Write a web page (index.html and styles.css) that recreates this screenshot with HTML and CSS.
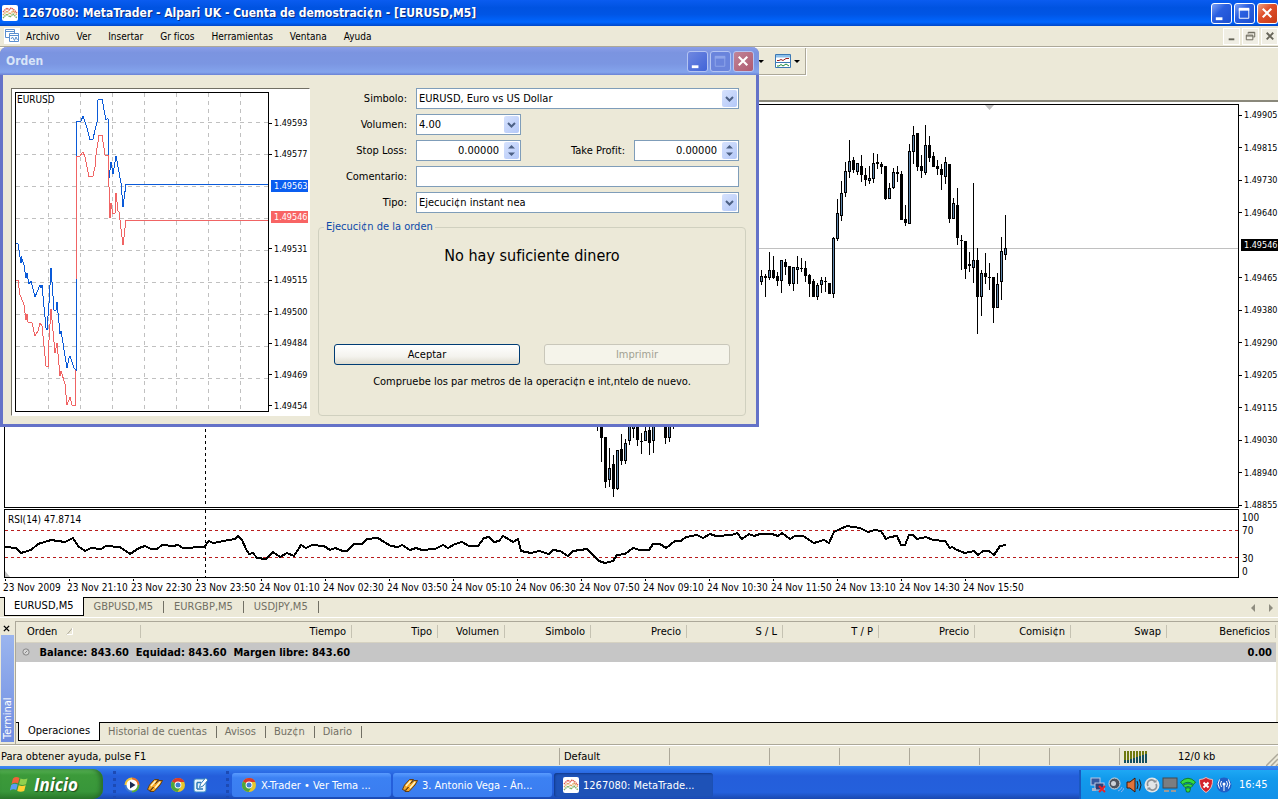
FILE: index.html
```html
<!DOCTYPE html>
<html lang="es">
<head>
    <meta charset="UTF-8">
    <meta name="viewport" content="width=device-width, initial-scale=1.0">
    <title>1267080: MetaTrader - Alpari UK</title>
    <link rel="stylesheet" href="styles.css">
</head>
<body>

    <svg class="sprite" aria-hidden="true">
        <symbol id="mt" viewBox="0 0 16 16">
            <rect width="16" height="16" rx="2" fill="#fff"/>
            <path d="M1 7l4-4 2 2 2-2 2 1 4 4" fill="none" stroke="#dc5a50" stroke-width="1.4" stroke-dasharray="1.4 .6"/>
            <path d="M1 10l4-4 3 3 3-3 4 4" fill="none" stroke="#e0a05a" stroke-width="1.4" stroke-dasharray="1.4 .6"/>
            <path d="M1 13l4-4 3 3 3-3 4 4" fill="none" stroke="#7ab062" stroke-width="1.4" stroke-dasharray="1.4 .6"/>
        </symbol>
        <symbol id="chrome" viewBox="0 0 16 16">
            <circle cx="8" cy="8" r="7" fill="#e8c62c"/>
            <path d="M8 8L2 4.4A7 7 0 0 1 14.4 5H8z" fill="#d8392c"/>
            <path d="M8 8L2 4.4A7 7 0 0 0 7.5 15L11 9.5z" fill="#4ca63c"/>
            <circle cx="8" cy="8" r="3.4" fill="#fff"/>
            <circle cx="8" cy="8" r="2.5" fill="#3f7fd0"/>
        </symbol>
        <symbol id="winamp" viewBox="0 0 16 16">
            <path d="M7.500 2.500h4L8.500 6.500 12 3.500h3.500L13 8l-6 6.500H3L6.500 10 3 13.500.5 12.500 2.500 8z" fill="#f7a928" stroke="#5c3608" stroke-width=".9"/>
            <path d="M8.500 4L4 9M13 5L8 11" stroke="#fff6c8" stroke-width="1.500"/>
        </symbol>
        <symbol id="chevron" viewBox="0 0 9 6">
            <path d="M1 1l3.500 3.500L8 1" fill="none" stroke="#4d6185" stroke-width="2"/>
        </symbol>
    </svg>

    <header class="titlebar">
        <svg class="icon"><use href="#mt"/></svg>
        <h1>1267080: MetaTrader - Alpari UK - Cuenta de demostraci¢n - [EURUSD,M5]</h1>
        <div class="window-buttons">
            <button type="button" aria-label="Minimizar"><svg viewBox="0 0 20 20"><path d="M4 14h7v3H4z" fill="#fff"/></svg></button>
            <button type="button" aria-label="Maximizar"><svg viewBox="0 0 20 20"><path d="M4.500 5v10h10V5z" fill="none" stroke="#fff"/><path d="M4 4h11v3H4z" fill="#fff"/></svg></button>
            <button type="button" class="close" aria-label="Cerrar"><svg viewBox="0 0 20 20"><path d="M5 5l9 9M14 5l-9 9" stroke="#fff" stroke-width="2.200"/></svg></button>
        </div>
    </header>

    <nav class="menubar">
        <svg class="icon" viewBox="0 0 16 16">
            <rect width="16" height="16" fill="#fff"/>
            <path d="M1.500 1.500h9v8h-9zM1.500 3.500h9" fill="#fff" stroke="#5b8fd0"/>
            <path d="M5.500 5.500h9v8h-9zM5.500 7.500h9" fill="#fff" stroke="#5b8fd0"/>
            <path d="M7 11l1.500-2 2 3.500L12 9l1.500 3" fill="none" stroke="#5b8fd0"/>
        </svg>
        <a href="#">Archivo</a>
        <a href="#">Ver</a>
        <a href="#">Insertar</a>
        <a href="#">Gr&nbsp;ficos</a>
        <a href="#">Herramientas</a>
        <a href="#">Ventana</a>
        <a href="#">Ayuda</a>
        <div class="mdi-buttons">
            <button type="button" aria-label="Minimizar gráfico"><svg viewBox="0 0 16 16"><path d="M5 10h6v2H5z" fill="#666459"/></svg></button>
            <button type="button" aria-label="Restaurar gráfico"><svg viewBox="0 0 16 16"><path d="M5.500 5V3.500h7v5H11M3.500 6.500h7v5h-7zM3.500 7.500h7M6 4h6" fill="none" stroke="#666459"/></svg></button>
            <button type="button" aria-label="Cerrar gráfico"><svg viewBox="0 0 16 16"><path d="M5 4l7 7M12 4l-7 7" stroke="#666459" stroke-width="2"/></svg></button>
        </div>
    </nav>

    <div class="toolbar">
        <div class="toolbar-group">
            <button type="button" aria-label="Períodos"><span class="caret"></span></button>
            <button type="button" aria-label="Plantillas">
                <svg class="icon" viewBox="0 0 16 16">
                    <path d="M.5 1.500h15v13H.5z" fill="#fff" stroke="#3b78b4"/>
                    <path d="M1 2h14v2.500H1z" fill="#8cc0ea"/>
                    <path d="M1 9.500h14" stroke="#3b78b4"/>
                    <path d="M2 7.500h2l2-1 2 1 3-2h3" fill="none" stroke="#9c2020"/>
                    <path d="M2 13h2l2-1.500 2 1.500 3-2 3 2" fill="none" stroke="#1d8a3c"/>
                </svg>
                <span class="caret"></span>
            </button>
        </div>
    </div>

    <main class="chart">
        <div class="plots">
            <svg class="plot price-plot" role="img" aria-label="EURUSD M5">
                <path d="M980 0h9l-4.500 5z" fill="#c0c0c0"/>
                <line x1="0" x2="100%" y1="143.500" y2="143.500" stroke="#c0c0c0"/>
                <line class="day-line" x1="200.500" x2="200.500" y1="0" y2="100%"/>
                <g id="candles"></g>
            </svg>
            <svg class="plot rsi-plot" role="img" aria-label="RSI">
                <line class="level" x1="0" x2="100%" y1="20.500" y2="20.500"/>
                <line class="level" x1="0" x2="100%" y1="47.500" y2="47.500"/>
                <line class="day-line" x1="200.500" x2="200.500" y1="0" y2="100%"/>
                <path d="M0 61l5 6H0z" fill="#c0c0c0"/>
                <polyline class="rsi-line" points="0,37 11,38 16,43 26,40 33,34 46,30 60,32 68,28 73,36 80,41 86,38 96,39 101,36 115,37 125,44 134,38 140,36 146,39 152,39 157,35 168,36 173,35 178,38 199,37 204,31 208,33 224,30 230,29 233,26 237,30 241,39 244,44 248,43 252,48 261,49 268,42 275,47 282,43 289,46 296,35 301,38 307,35 319,36 325,40 330,38 338,41 342,41 349,34 357,34 362,29 373,28 379,32 386,36 393,37 397,35 405,40 411,38 417,40 430,39 438,35 443,38 450,34 457,32 464,36 473,36 479,28 484,27 489,32 494,31 498,26 505,30 508,32 513,29 516,41 526,43 534,41 544,44 548,40 555,41 563,46 568,41 582,39 587,44 594,51 600,53 608,51 612,45 620,44 628,38 635,40 644,40 648,34 655,34 661,38 670,31 676,31 681,27 692,25 698,28 705,24 711,26 727,25 732,23 737,29 744,24 749,26 755,24 767,24 773,26 777,23 785,29 790,26 798,26 809,33 819,30 824,33 829,22 835,19 842,16 855,18 863,22 870,20 876,21 881,29 885,27 892,26 896,35 900,35 904,25 908,25 912,29 921,27 928,30 940,31 945,38 947,37 952,40 960,43 969,41 973,45 978,41 984,41 989,45 995,36 1001,35"/>
                <text x="3" y="13">RSI(14) 47.8714</text>
            </svg>
            <ol class="times">
                <li>23 Nov 2009</li>
                <li>23 Nov 21:10</li>
                <li>23 Nov 22:30</li>
                <li>23 Nov 23:50</li>
                <li>24 Nov 01:10</li>
                <li>24 Nov 02:30</li>
                <li>24 Nov 03:50</li>
                <li>24 Nov 05:10</li>
                <li>24 Nov 06:30</li>
                <li>24 Nov 07:50</li>
                <li>24 Nov 09:10</li>
                <li>24 Nov 10:30</li>
                <li>24 Nov 11:50</li>
                <li>24 Nov 13:10</li>
                <li>24 Nov 14:30</li>
                <li>24 Nov 15:50</li>
            </ol>
        </div>
        <div class="scales">
            <ul class="prices">
                <li>1.49905</li>
                <li>1.49815</li>
                <li>1.49730</li>
                <li>1.49640</li>
                <li class="last-price">1.49546</li>
                <li>1.49465</li>
                <li>1.49380</li>
                <li>1.49290</li>
                <li>1.49205</li>
                <li>1.49115</li>
                <li>1.49030</li>
                <li>1.48940</li>
                <li>1.48855</li>
            </ul>
            <div class="rsi-scale">
                <div>100<br>70</div>
                <div>30<br>0</div>
            </div>
        </div>
    </main>

    <nav class="tabs chart-tabs">
        <a href="#" class="active">EURUSD,M5</a>
        <a href="#">GBPUSD,M5</a>
        <a href="#">EURGBP,M5</a>
        <a href="#">USDJPY,M5</a>
        <div class="tab-scroll">
            <button type="button" aria-label="Anterior"><svg viewBox="0 0 5 8"><path d="M4 0v8L0 4z" fill="#8f8d80"/></svg></button>
            <button type="button" aria-label="Siguiente"><svg viewBox="0 0 5 8"><path d="M1 0v8l4-4z" fill="#8f8d80"/></svg></button>
        </div>
    </nav>

    <section class="terminal">
        <div class="terminal-side">
            <button type="button" aria-label="Cerrar terminal"><svg viewBox="0 0 8 8"><path d="M1 1l6 6M7 1L1 7" stroke="#000" stroke-width="1.600"/></svg></button>
            <span>Terminal</span>
        </div>
        <div class="terminal-body">
            <div class="orders">
                <table>
                    <colgroup>
                        <col class="c-order"><col class="c-time"><col class="c-mid"><col class="c-volume"><col class="c-mid">
                        <col class="c-wide"><col class="c-wide"><col class="c-wide"><col class="c-wide"><col class="c-wide"><col class="c-wide"><col>
                    </colgroup>
                    <thead>
                        <tr>
                            <th class="left">Orden
                                <svg viewBox="0 0 8 8"><path d="M1 7.500L6.500 1" stroke="#aca899" fill="none"/><path d="M6.500 1v6.500H1" stroke="#fff" fill="none"/></svg>
                            </th>
                            <th>Tiempo</th>
                            <th>Tipo</th>
                            <th>Volumen</th>
                            <th>Simbolo</th>
                            <th>Precio</th>
                            <th>S / L</th>
                            <th>T / P</th>
                            <th>Precio</th>
                            <th>Comisi¢n</th>
                            <th>Swap</th>
                            <th>Beneficios</th>
                        </tr>
                    </thead>
                    <tbody>
                        <tr>
                            <td colspan="11">
                                <svg viewBox="0 0 9 9"><circle cx="4.500" cy="4.500" r="3.500" fill="#d8d8d8" stroke="#7d7d7d"/><path d="M3 6l3-3" stroke="#7d7d7d"/></svg>
                                Balance: 843.60&nbsp; Equidad: 843.60&nbsp; Margen libre: 843.60
                            </td>
                            <td class="profit">0.00</td>
                        </tr>
                    </tbody>
                </table>
            </div>
            <nav class="tabs terminal-tabs">
                <a href="#" class="active">Operaciones</a>
                <a href="#">Historial de cuentas</a>
                <a href="#">Avisos</a>
                <a href="#">Buz¢n</a>
                <a href="#">Diario</a>
            </nav>
        </div>
    </section>

    <div class="statusbar">
        <span class="help">Para obtener ayuda, pulse F1</span>
        <span class="profile">Default</span>
        <span class="date"></span>
        <span class="cell"></span>
        <span class="cell"></span>
        <span class="cell"></span>
        <span class="cell"></span>
        <span class="cell"></span>
        <span class="traffic">
            <svg viewBox="0 0 24 12">
                <path d="M1 0v12M4 0v12M7 0v12M10 0v12M13 0v12M16 0v12M19 0v12M22 0v12" stroke="#6f7a10" stroke-width="2"/>
                <path d="M1 9v3M4 9v3M7 8v4M10 7v5M13 6v6M16 5v7M19 4v8M22 3v9" stroke="#14505e" stroke-width="2"/>
            </svg>
            12/0 kb
        </span>
        <svg class="grip" viewBox="0 0 12 14"><path d="M0 14L12 2M5 14l7-7M10 14l2-2" stroke="#aca899" stroke-width="1.500"/></svg>
    </div>

    <footer class="taskbar">
        <button type="button" class="start">
            <svg viewBox="0 0 18 18">
                <path d="M3 3.500q3-2.500 6.500-.5L8 8.500q-3-1.500-6.500.5z" fill="#f0623a"/>
                <path d="M10.500 3.500q3 1.500 7 0L16 9.200q-3.500 1.500-7 0z" fill="#8fd04e"/>
                <path d="M1.200 10q3-2 6.500-.5L6.200 15Q3 13.500-.2 15.500z" fill="#5a9cf4"/>
                <path d="M8.700 10.200q3 1.500 7 0L14.200 16q-3.500 1.500-7 0z" fill="#ffd032"/>
            </svg>
            Inicio
        </button>
        <div class="quick">
            <a href="#" aria-label="Reproductor"><svg class="icon" viewBox="0 0 16 16">
                <circle cx="8" cy="8" r="7.500" fill="#3c78d0"/>
                <path d="M8 .5A7.500 7.500 0 0 1 15.500 8H8z" fill="#e8702a"/><path d="M8 15.500A7.500 7.500 0 0 0 15.500 8H8z" fill="#58ac38"/><path d="M8 .5A7.500 7.500 0 0 0 .5 8H8z" fill="#f0c438"/>
                <circle cx="8" cy="8" r="5.500" fill="#fff"/><path d="M6 4.500L11.500 8 6 11.500z" fill="#1b2a52"/>
            </svg></a>
            <a href="#" aria-label="Winamp"><svg class="icon"><use href="#winamp"/></svg></a>
            <a href="#" aria-label="Chrome"><svg class="icon"><use href="#chrome"/></svg></a>
            <a href="#" aria-label="Escritorio"><svg class="icon" viewBox="0 0 16 16">
                <rect x="1" y="2" width="12" height="13" rx="2" fill="#e8f5fd" stroke="#3a8ac4"/>
                <path d="M4 5.500h4M4 12h6M4 5.500V12" stroke="#2d7ab8" stroke-width="1.500" fill="none"/>
                <path d="M6.500 10.500l1-3.500 5-6 2.500 2-5 6z" fill="#fff" stroke="#2d7ab8"/>
            </svg></a>
        </div>
        <div class="tasks">
            <button type="button"><svg class="icon"><use href="#chrome"/></svg>X-Trader • Ver Tema ...</button>
            <button type="button"><svg class="icon"><use href="#winamp"/></svg>3. Antonio Vega - Án...</button>
            <button type="button" class="active"><svg class="icon"><use href="#mt"/></svg>1267080: MetaTrade...</button>
        </div>
        <div class="tray">
            <svg viewBox="0 0 16 16"><rect x="1" y="1" width="9" height="7" fill="#3559a0" stroke="#b8c8e4"/><rect x="5" y="6" width="9" height="7" fill="#2c3f78" stroke="#b8c8e4"/><path d="M2 11h4v3H2z" fill="#a7b4cc"/><path d="M9 9l6 6M15 9l-6 6" stroke="#e2242a" stroke-width="2"/></svg>
            <svg viewBox="0 0 16 16"><circle cx="6.500" cy="6.500" r="5.500" fill="#4d545e" stroke="#d8dce0"/><circle cx="5.500" cy="6.500" r="2.500" fill="#cdd2d8"/><path d="M10 14q3-1 4-4M13 15q2-1 3-4" stroke="#8cb0ec" fill="none"/></svg>
            <svg viewBox="0 0 16 16"><path d="M1 5h3l5-4v14l-5-4H1z" fill="#e0733a" stroke="#3d1a0c"/><path d="M11 4q2 4 0 8M13.500 2.500q3 5.500 0 11" stroke="#2b1a14" fill="none"/></svg>
            <svg viewBox="0 0 16 16"><circle cx="8" cy="8" r="7.500" fill="#e2e5e7"/><path d="M4 9a4 4 0 0 1 7-4M12 7a4 4 0 0 1-7 4" fill="none" stroke="#8c9196" stroke-width="1.800"/><path d="M9.500 5.500h3v-3zM6.500 10.500h-3v3z" fill="#8c9196"/></svg>
            <svg viewBox="0 0 16 16"><rect x="1" y="1" width="14" height="10" fill="#7b7d80" stroke="#45484c"/><path d="M2 13h5v2H2zM9 13h5v2H9z" fill="#9a9a98"/></svg>
            <svg viewBox="0 0 16 16"><path d="M.5 5q7.500-7.500 15 0l-2 2.500q-5.500-4.500-11 0z" fill="#35dc40" stroke="#0f6a18" stroke-width=".8"/><path d="M3 8.500q5-3.500 10 0l-2 2q-3-2-6 0z" fill="#35dc40" stroke="#0f6a18" stroke-width=".8"/><path d="M5.500 11.500q2.500-1.500 5 0L9.500 15h-3z" fill="#35dc40" stroke="#0f6a18" stroke-width=".8"/></svg>
            <svg viewBox="0 0 16 16"><path d="M8 .5q3 2 6.500 2 .5 9-6.500 13Q1 11.500 1.500 2.500 5 2.500 8 .5z" fill="#d4222c" stroke="#e9bcbc"/><path d="M5.500 5.500l5 5M10.500 5.500l-5 5" stroke="#fff" stroke-width="2"/></svg>
            <svg viewBox="0 0 16 16"><circle cx="8" cy="8" r="7.500" fill="#1f5fc8"/><circle cx="8" cy="7" r="1.500" fill="#fff"/><path d="M8 8v6M5.500 10q-2-3 0-6M10.500 10q2-3 0-6M3.500 11.500q-3-4.500 0-9M12.500 11.500q3-4.500 0-9" stroke="#fff" fill="none"/></svg>
            <span>16:45</span>
        </div>
    </footer>

    <div class="dialog" role="dialog" aria-labelledby="dialog-title">
        <div class="dialog-title">
            <h2 id="dialog-title">Orden</h2>
            <div class="window-buttons">
                <button type="button" aria-label="Minimizar orden"><svg viewBox="0 0 20 20"><path d="M4 14h7v3H4z" fill="#fff"/></svg></button>
                <button type="button" aria-label="Maximizar orden" disabled><svg viewBox="0 0 20 20"><path d="M4.500 5v10h10V5z" fill="none" stroke="#8fa5ea"/><path d="M4 4h11v3H4z" fill="#8fa5ea"/></svg></button>
                <button type="button" class="close" aria-label="Cerrar orden"><svg viewBox="0 0 20 20"><path d="M5 5l9 9M14 5l-9 9" stroke="#fff" stroke-width="2.200"/></svg></button>
            </div>
        </div>
        <form class="dialog-body">
            <div class="tick-chart">
                <svg class="plot" role="img" aria-label="EURUSD ticks">
                    <g id="grid"></g>
                    <polyline class="ask" points="0,150 2,151 5,170 5,163 8,172 10,185 11,180 13,191 15,188 19,204 24,192 25,195 26,192 30,235 31,237 33,210 35,175 38,217 40,217 41,209 44,241 45,238 51,275 53,265 54,263 58,275 60,277 60,28 65,28 67,23 71,35 74,47 77,46 79,37 81,29 82,7 86,6 90,27 92,25 93,85 95,69 97,81 100,63 103,79 105,90 107,114 110,91 400,91"/>
                    <polyline class="bid" points="0,187 2,187 4,202 5,204 8,212 10,227 11,221 12,229 16,230 19,243 22,238 24,230 26,233 30,273 32,274 33,247 35,216 39,260 41,250 44,283 45,278 49,291 51,312 54,304 56,312 59,312 59,277"/>
                    <polyline class="bid" points="60,186 60,63 63,64 67,59 69,64 71,74 73,84 77,83 79,74 80,62 83,42 86,42 89,62 92,62 94,125 95,110 97,121 99,120 100,100 102,118 103,119 107,152 110,127 400,127"/>
                    <text x="1" y="10">EURUSD</text>
                </svg>
                <ul class="tick-scale">
                    <li>1.49593</li>
                    <li>1.49577</li>
                    <li class="ask-price">1.49563</li>
                    <li class="bid-price">1.49546</li>
                    <li>1.49531</li>
                    <li>1.49515</li>
                    <li>1.49500</li>
                    <li>1.49484</li>
                    <li>1.49469</li>
                    <li>1.49454</li>
                </ul>
            </div>
            <div class="order">
                <div class="fields">
                    <label for="simbolo">Simbolo:</label>
                    <div class="control wide">
                        <select id="simbolo"><option>EURUSD, Euro vs US Dollar</option></select>
                        <span class="drop"><svg><use href="#chevron"/></svg></span>
                    </div>
                    <label for="volumen">Volumen:</label>
                    <div class="control">
                        <select id="volumen"><option>4.00</option></select>
                        <span class="drop"><svg><use href="#chevron"/></svg></span>
                    </div>
                    <label class="new-row" for="stop">Stop Loss:</label>
                    <div class="control spin">
                        <input type="text" id="stop" value="0.00000">
                        <span class="drop"><svg viewBox="0 0 9 13"><path d="M1 4.500h7L4.500 1zM1 8.500h7L4.500 12z" fill="#4d6185"/></svg></span>
                    </div>
                    <label for="take">Take Profit:</label>
                    <div class="control spin">
                        <input type="text" id="take" value="0.00000">
                        <span class="drop"><svg viewBox="0 0 9 13"><path d="M1 4.500h7L4.500 1zM1 8.500h7L4.500 12z" fill="#4d6185"/></svg></span>
                    </div>
                    <label for="comentario">Comentario:</label>
                    <div class="control wide"><input type="text" id="comentario"></div>
                    <label for="tipo">Tipo:</label>
                    <div class="control wide">
                        <select id="tipo"><option>Ejecuci¢n instant&nbsp;nea</option></select>
                        <span class="drop"><svg><use href="#chevron"/></svg></span>
                    </div>
                </div>
                <fieldset>
                    <legend>Ejecuci¢n de la orden</legend>
                    <p class="result">No hay suficiente dinero</p>
                    <div class="actions">
                        <button type="button" class="default">Aceptar</button>
                        <button type="button" disabled>Imprimir</button>
                    </div>
                    <p class="hint">Compruebe los par&nbsp;metros de la operaci¢n e int‚ntelo de nuevo.</p>
                </fieldset>
            </div>
        </form>
    </div>

    <script src="script.js"></script>
</body>
</html>
```
FILE: styles.css
```css
* {
    margin: 0;
    padding: 0;
    box-sizing: border-box;
}

body {
    font-family: Tahoma, "DejaVu Sans Condensed", "DejaVu Sans", sans-serif;
    font-size: 11px;
    color: #000;
    background: #ece9d8;
    height: 100vh;
    display: flex;
    flex-direction: column;
    overflow: hidden;
}

ul, ol {
    list-style: none;
}

a {
    color: inherit;
    text-decoration: none;
}

button, input, select {
    font: inherit;
    color: inherit;
}

svg {
    display: block;
}

.sprite {
    display: none;
}

.icon {
    width: 16px;
    height: 16px;
    flex: none;
}

/* Title bar */
.titlebar {
    height: 26px;
    flex: none;
    display: flex;
    align-items: center;
    gap: 4px;
    padding: 0 0 0 2px;
    background: linear-gradient(#0a5cf0, #0053e1 30%, #0055e5 55%, #0066ff 85%, #0047c8);
}

.titlebar h1, .dialog-title h2 {
    flex: 1;
    font-size: 12px;
    color: #fff;
    text-shadow: 1px 1px #0a2a80;
    white-space: nowrap;
}

.window-buttons {
    display: flex;
    gap: 2px;
}

.window-buttons button {
    width: 21px;
    height: 21px;
    border: 1px solid #fff;
    border-radius: 3px;
    background: linear-gradient(135deg, #7fa3f5, #2a5fe0 40%, #1c4fd0);
}

.window-buttons .close {
    background: linear-gradient(135deg, #f0a080, #e0502c 40%, #c83a14);
}

.window-buttons svg {
    width: 19px;
    height: 19px;
}

/* Menu */
.menubar {
    height: 21px;
    flex: none;
    display: flex;
    align-items: center;
    gap: 17px;
    padding-left: 4px;
    font-size: 10px;
    border-bottom: 1px solid #aca899;
}

.menubar > .icon {
    margin-right: -11px;
}

.mdi-buttons {
    margin-left: auto;
    display: flex;
    gap: 2px;
}

.mdi-buttons button {
    width: 17px;
    height: 17px;
    border: 1px solid #fff;
    background: #f0eee4;
}

/* Toolbar */
.toolbar {
    height: 53px;
    flex: none;
    border-top: 1px solid #fff;
}

.toolbar-group {
    width: 806px;
    height: 27px;
    display: flex;
    justify-content: flex-end;
    align-items: center;
    gap: 11px;
    padding-right: 5px;
    border: solid #aca899;
    border-width: 0 1px 1px 0;
    box-shadow: 1px 1px #fff;
}

.toolbar button {
    display: flex;
    align-items: center;
    gap: 3px;
    border: 0;
    background: none;
}

.caret {
    border: 3px solid transparent;
    border-top-color: #000;
    border-bottom: 0;
}

/* Chart */
.chart {
    flex: 1;
    min-height: 0;
    display: flex;
    padding: 2px 0 0 4px;
    border-top: 2px solid #8a887b;
    font-size: 10px;
    background: #fff;
}

.plots {
    flex: 1;
    min-width: 0;
    display: flex;
    flex-direction: column;
    gap: 1px;
}

.plot {
    width: 100%;
    border: 1px solid #000;
    overflow: hidden;
}

.price-plot {
    flex: 1;
    min-height: 0;
}

.rsi-plot {
    height: 69px;
}

.level {
    stroke: #b81c1c;
    stroke-dasharray: 3 3;
    shape-rendering: crispEdges;
}

.day-line {
    stroke: #000;
    stroke-dasharray: 3 3;
}

.rsi-line {
    fill: none;
    stroke: #000;
    stroke-width: 2;
    shape-rendering: crispEdges;
}

#candles {
    shape-rendering: crispEdges;
}

.body {
    fill: #000;
}

.rise {
    fill: #5f87ad;
}

.times {
    height: 18px;
    display: flex;
    margin-left: -1px;
}

.times li {
    flex: 0 0 64px;
    line-height: 14px;
    white-space: nowrap;
}

.times li::before {
    content: "";
    display: block;
    width: 1px;
    height: 2px;
    margin-left: 2px;
    background: #000;
}

.scales {
    width: 39px;
    flex: none;
    display: flex;
    flex-direction: column;
}

.prices, .tick-scale {
    font-size: 9px;
}

.prices {
    flex: 1;
    display: flex;
    flex-direction: column;
    justify-content: space-between;
    padding-top: 5px;
}

.prices li, .tick-scale li {
    display: flex;
    align-items: center;
    gap: 2px;
    line-height: 12px;
}

.prices li::before, .tick-scale li::before {
    content: "";
    width: 3px;
    height: 1px;
    background: #000;
}

.prices .last-price {
    margin-left: 2px;
    gap: 0;
    color: #fff;
    background: #000;
}

.rsi-scale {
    height: 67px;
    display: flex;
    flex-direction: column;
    justify-content: space-between;
    margin-bottom: 19px;
    padding-left: 3px;
    line-height: 13px;
}

/* Tabs under the chart and inside the terminal */
.tabs {
    flex: none;
    display: flex;
    align-items: flex-start;
    border-top: 1px solid #000;
    color: #716f64;
}

.tabs a {
    padding: 0 10px 0 8px;
    line-height: 18px;
    position: relative;
}

.tabs a:not(.active)::after {
    content: "";
    position: absolute;
    right: 0;
    top: 3px;
    height: 12px;
    border-right: 1px solid #716f64;
}

.tabs .active {
    color: #000;
    background: #fff;
    border: 1px solid #000;
    border-width: 0 1px 1px;
    padding: 0 9px;
    margin-top: -1px;
}

.chart-tabs {
    height: 20px;
    padding-left: 4px;
}

.chart-tabs a {
    padding: 0 11px 0 10px;
}

.tab-scroll {
    margin-left: auto;
    display: flex;
    gap: 12px;
    padding: 6px 5px 0 0;
}

.tab-scroll button, .terminal-side button {
    border: 0;
    background: none;
}

.tab-scroll svg {
    width: 5px;
    height: 8px;
}

/* Terminal */
.terminal {
    height: 127px;
    flex: none;
    display: flex;
    gap: 1px;
    padding-top: 3px;
    border-top: 1px solid #fff;
}

.terminal-side {
    width: 14px;
    display: flex;
    flex-direction: column;
    padding-left: 1px;
}

.terminal-side button {
    height: 14px;
    padding-left: 2px;
}

.terminal-side svg {
    width: 7px;
    height: 7px;
}

.terminal-side span {
    height: 107px;
    writing-mode: vertical-rl;
    transform: rotate(180deg);
    line-height: 13px;
    padding-top: 3px;
    color: #fff;
    background: linear-gradient(#6f8de2, #9bb5ee);
}

.terminal-body {
    flex: 1;
    display: flex;
    flex-direction: column;
    border-top: 1px solid #aca899;
    border-left: 1px solid #aca899;
}

.orders {
    flex: 1;
    margin-right: 2px;
    background: #fff;
}

.orders table {
    width: 100%;
    table-layout: fixed;
    border-collapse: collapse;
}

.c-order { width: 125px; }
.c-time { width: 211px; }
.c-mid { width: 86px; }
.c-volume { width: 67px; }
.c-wide { width: 96px; }

.orders th {
    height: 20px;
    padding-right: 6px;
    text-align: right;
    font-weight: normal;
    background: #ece9d8;
    border-bottom: 1px solid #d6d2c2;
    background-image: linear-gradient(#c5c2b2, #c5c2b2);
    background-size: 1px 13px;
    background-position: right 3px;
    background-repeat: no-repeat;
}

.orders th.left {
    text-align: left;
    padding-left: 11px;
}

.orders th svg, .orders td svg {
    display: inline-block;
    width: 8px;
    height: 8px;
}

.orders th svg {
    margin-left: 6px;
}

.orders td {
    height: 20px;
    padding-left: 6px;
    font-weight: bold;
    background: #c6c6c6;
}

.orders td svg {
    margin-right: 6px;
}

.orders .profit {
    text-align: right;
    padding-right: 4px;
}

.terminal-tabs {
    height: 22px;
    padding-left: 2px;
}

/* Status bar */
.statusbar {
    height: 22px;
    flex: none;
    display: flex;
    align-items: center;
    padding-top: 2px;
    border-top: 1px solid #aca899;
    box-shadow: inset 0 1px #fff;
    line-height: 17px;
}

.statusbar span {
    height: 17px;
    padding-left: 4px;
    border-left: 1px solid #aca899;
    white-space: nowrap;
}

.statusbar .help {
    flex: 1;
    padding-left: 1px;
    border: 0;
}

.profile { width: 110px; }
.date { width: 100px; }
.cell { width: 70px; }

.statusbar .traffic {
    width: 147px;
    display: flex;
    align-items: center;
    gap: 30px;
}

.traffic svg {
    width: 24px;
    height: 12px;
    shape-rendering: crispEdges;
}

.grip {
    width: 12px;
    height: 14px;
    align-self: flex-end;
}

/* Taskbar */
.taskbar {
    height: 33px;
    flex: none;
    display: flex;
    align-items: stretch;
    color: #fff;
    background: linear-gradient(#3f8cf0, #2f74ea 12%, #245edb 30%, #2460dc 80%, #1a48b0);
}

.start {
    width: 103px;
    margin-top: 3px;
    padding-left: 10px;
    display: flex;
    align-items: center;
    gap: 6px;
    border: 0;
    border-radius: 0 10px 10px 0;
    font: italic bold 17px "Open Sans", sans-serif;
    color: #fff;
    text-shadow: 1px 1px 1px #1c4a1a;
    background: linear-gradient(#5cb85a, #3c9a3a 20%, #38963a 75%, #2a7a2a);
    box-shadow: inset -3px 0 4px #2a6f2c;
}

.start svg {
    width: 18px;
    height: 18px;
}

.quick {
    width: 116px;
    display: flex;
    align-items: center;
    gap: 7px;
    margin: 5px 3px 0 10px;
    padding-left: 8px;
    border: dotted #1c4ab4;
    border-width: 0 3px;
}

.tasks {
    flex: 1;
    display: flex;
    gap: 2px;
    padding: 7px 0 2px;
}

.tasks button {
    flex: 0 1 159px;
    display: flex;
    align-items: center;
    gap: 4px;
    padding: 0 9px;
    border: 0;
    border-radius: 3px;
    color: #fff;
    background: linear-gradient(#5a9cff, #3c81f3 20%, #3a7df0);
    white-space: nowrap;
}

.tasks .active {
    background: #1e52b7;
    box-shadow: inset 1px 1px 2px #123a8c;
}

.tray {
    width: 199px;
    display: flex;
    align-items: center;
    gap: 2px;
    margin-top: 4px;
    padding-left: 9px;
    border-left: 2px solid #1a58c0;
    background: linear-gradient(#1ea8f4, #129aec 30%, #1290e8);
}

.tray svg {
    width: 16px;
    height: 16px;
}

.tray span {
    margin-left: 5px;
}

/* Order dialog */
.dialog {
    position: absolute;
    top: 47px;
    left: 0;
    width: 759px;
    border: 3px solid #6472c8;
    border-top: 0;
    border-radius: 7px 7px 0 0;
    background: #ece9d8;
}

.dialog-title {
    height: 28px;
    margin: 0 -3px;
    display: flex;
    align-items: center;
    padding: 0 5px 0 6px;
    border-radius: 7px 7px 0 0;
    background: linear-gradient(#8a9ee8, #7b94e0 20%, #7b96e2 60%, #84a4ec 90%, #6a82d4);
}

.dialog-title h2 {
    color: #d8e4f8;
    text-shadow: none;
}

.dialog .window-buttons button {
    border-color: #b4c4f2;
    background: linear-gradient(135deg, #7088e0, #4064d8);
}

.dialog .window-buttons button:disabled {
    background: #6a84dc;
}

.dialog .window-buttons .close {
    background: linear-gradient(135deg, #c08498, #b05a70);
}

.dialog-body {
    display: flex;
    gap: 8px;
    padding: 13px 10px 8px 8px;
}

.tick-chart {
    width: 299px;
    height: 328px;
    display: flex;
    padding: 3px 1px 3px 3px;
    border: 1px solid #fff;
    border-top-color: #716f64;
    border-left-color: #716f64;
    background: #fff;
}

.tick-chart .plot {
    flex: 1;
    min-width: 0;
    height: 320px;
    font-size: 10px;
    shape-rendering: crispEdges;
}

.grid-line {
    stroke: #c0c0c0;
    stroke-dasharray: 4 4;
}

.ask, .bid {
    fill: none;
    stroke: #0a5ad8;
}

.bid {
    stroke: #f06464;
}

.tick-scale {
    width: 39px;
    flex: none;
    display: flex;
    flex-direction: column;
    justify-content: space-between;
    padding: 25px 0 0;
}

.tick-scale .ask-price, .tick-scale .bid-price {
    margin-left: 2px;
    gap: 0;
    color: #fff;
    background: #0a5ef0;
}

.tick-scale .bid-price {
    background: #f86464;
}

.tick-scale .ask-price::before, .tick-scale .bid-price::before {
    background: none;
}

.order {
    flex: 1;
    display: flex;
    flex-direction: column;
    gap: 7px;
}

.fields {
    display: grid;
    grid-template-columns: 89px 105px 1fr 105px;
    column-gap: 9px;
    row-gap: 5px;
    padding-right: 7px;
}

.fields label {
    text-align: right;
    line-height: 21px;
}

.new-row {
    grid-column: 1;
}

.control {
    position: relative;
    height: 21px;
}

.wide {
    grid-column: span 3;
}

.control input, .control select {
    width: 100%;
    height: 21px;
    padding: 0 2px;
    border: 1px solid #7f9db9;
    border-radius: 0;
    background: #fff;
    appearance: none;
}

.control.spin input {
    padding-right: 21px;
    text-align: right;
}

.drop {
    position: absolute;
    top: 2px;
    right: 2px;
    width: 15px;
    height: 17px;
    display: flex;
    align-items: center;
    justify-content: center;
    border-radius: 2px;
    background: linear-gradient(135deg, #d6e2fd, #b4c8f8);
    pointer-events: none;
}

.drop svg {
    width: 9px;
    height: 6px;
}

.spin .drop svg {
    height: 13px;
}

fieldset {
    flex: 1;
    display: flex;
    flex-direction: column;
    padding: 0 15px;
    border: 1px solid #d0d0bf;
    border-radius: 4px;
}

legend {
    margin-left: -10px;
    padding: 0 2px;
    line-height: 14px;
    color: #0b48a8;
}

.result {
    height: 110px;
    padding-top: 9px;
    font-size: 16px;
    line-height: 26px;
    text-align: center;
}

.actions {
    display: flex;
    gap: 24px;
}

.actions button {
    flex: 1;
    height: 21px;
    border: 1px solid #c9c7ba;
    border-radius: 3px;
    background: #f5f4ea;
}

.actions button:disabled {
    color: #a1a192;
}

.actions .default {
    border-color: #003c74;
    background: linear-gradient(#fff, #f4f3ee 60%, #dfdccf);
}

.hint {
    margin-top: 9px;
    line-height: 16px;
    text-align: center;
}
```
FILE: script.js
```js
const SVG_NS = 'http://www.w3.org/2000/svg';

// [x, high, body top, body bottom, low, closes up]
const candles = [
    [592, 318, 320, 322, 326, 0], [596, 318, 320, 333, 357, 0], [600, 332, 332, 377, 383, 0],
    [604, 343, 363, 375, 382, 1], [608, 350, 359, 384, 392, 0], [612, 345, 345, 384, 385, 1],
    [616, 329, 344, 356, 360, 0], [620, 334, 338, 356, 359, 1], [624, 318, 320, 336, 340, 1],
    [628, 318, 320, 324, 333, 1], [632, 318, 320, 335, 341, 0], [636, 328, 336, 337, 349, 0],
    [640, 318, 326, 336, 336, 1], [644, 322, 325, 338, 350, 0], [648, 318, 320, 336, 348, 1],
    [660, 318, 320, 333, 339, 0], [664, 318, 320, 333, 337, 1], [668, 318, 320, 322, 324, 0],
    [756, 165, 171, 177, 180, 1], [760, 169, 171, 173, 192, 0], [764, 147, 165, 173, 175, 1],
    [768, 151, 165, 173, 174, 0], [772, 167, 171, 176, 181, 0], [776, 155, 155, 176, 188, 1],
    [780, 154, 157, 162, 170, 0], [784, 161, 161, 179, 181, 0], [788, 162, 162, 179, 186, 1],
    [792, 151, 162, 165, 179, 1], [796, 153, 163, 164, 167, 0], [800, 156, 163, 171, 177, 0],
    [804, 169, 170, 179, 192, 0], [808, 174, 176, 192, 192, 0], [812, 178, 180, 192, 195, 1],
    [816, 172, 175, 180, 188, 1], [820, 172, 176, 177, 187, 0], [824, 178, 178, 189, 189, 0],
    [828, 132, 133, 189, 193, 1], [832, 94, 108, 134, 136, 1], [836, 76, 88, 111, 116, 1],
    [840, 57, 66, 88, 92, 1], [844, 35, 56, 67, 73, 1], [848, 52, 55, 65, 68, 0],
    [852, 58, 58, 67, 70, 1], [856, 50, 61, 70, 77, 0], [860, 63, 70, 75, 81, 0],
    [864, 61, 73, 76, 79, 1], [868, 48, 58, 74, 78, 1], [872, 49, 57, 59, 64, 0],
    [876, 57, 59, 62, 69, 0], [880, 61, 61, 94, 95, 0], [884, 78, 83, 94, 94, 1],
    [888, 63, 67, 83, 84, 1], [892, 61, 67, 69, 77, 0], [896, 66, 69, 115, 115, 0],
    [900, 100, 114, 118, 121, 0], [904, 39, 46, 119, 119, 1], [908, 21, 30, 47, 59, 1],
    [912, 28, 28, 62, 66, 0], [916, 50, 61, 66, 73, 0], [920, 20, 40, 68, 70, 1],
    [924, 31, 40, 53, 57, 0], [928, 47, 51, 62, 62, 0], [932, 55, 61, 64, 70, 0],
    [936, 59, 64, 70, 85, 0], [940, 52, 57, 72, 79, 1], [944, 59, 59, 114, 118, 0],
    [948, 93, 98, 114, 114, 1], [952, 83, 100, 133, 140, 0], [956, 130, 135, 136, 165, 0],
    [960, 136, 136, 164, 174, 0], [964, 147, 159, 161, 167, 0], [968, 78, 155, 163, 178, 1],
    [972, 143, 155, 192, 229, 0], [976, 165, 168, 192, 211, 1], [980, 148, 168, 172, 179, 0],
    [984, 158, 172, 173, 185, 0], [988, 172, 172, 203, 218, 0], [992, 168, 179, 203, 203, 1],
    [996, 132, 146, 177, 195, 1], [1000, 110, 143, 150, 155, 1]
];

function add(parent, name, attrs) {
    const el = document.createElementNS(SVG_NS, name);
    Object.entries(attrs).forEach(([key, value]) => el.setAttribute(key, value));
    parent.appendChild(el);
}

const candleLayer = document.getElementById('candles');
candles.forEach(([x, high, top, bottom, low, up]) => {
    add(candleLayer, 'rect', { class: 'body', x: x, y: high, width: 1, height: low - high });
    add(candleLayer, 'rect', { class: 'body', x: x - 1, y: top, width: 3, height: bottom - top });
    if (up && bottom - top > 2) {
        add(candleLayer, 'rect', { class: 'rise', x: x, y: top + 1, width: 1, height: bottom - top - 2 });
    }
});

const grid = document.getElementById('grid');
for (let x = 32; x < 253; x += 32) {
    add(grid, 'line', { class: 'grid-line', x1: x + 0.5, x2: x + 0.5, y1: 0, y2: '100%' });
}
for (let y = 29; y < 300; y += 32) {
    add(grid, 'line', { class: 'grid-line', x1: 0, x2: '100%', y1: y + 0.5, y2: y + 0.5 });
}
```
